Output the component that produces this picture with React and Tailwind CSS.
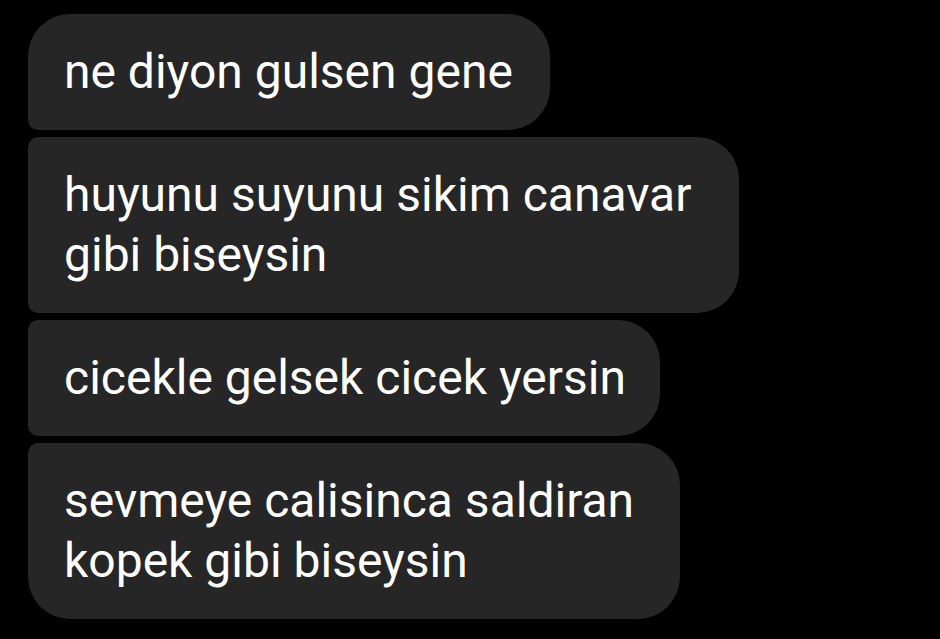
import React from "react";

const messages = [
    { lines: ["ne diyon gulsen gene"], width: "w-[522px]", corners: "rounded-tl-[42px] rounded-bl-[10px]" },
    { lines: ["huyunu suyunu sikim canavar", "gibi biseysin"], width: "w-[711px]", corners: "rounded-tl-[10px] rounded-bl-[10px]" },
    { lines: ["cicekle gelsek cicek yersin"], width: "w-[632px]", corners: "rounded-tl-[10px] rounded-bl-[10px]" },
    { lines: ["sevmeye calisinca saldiran", "kopek gibi biseysin"], width: "w-[652px]", corners: "rounded-tl-[10px] rounded-bl-[42px]" },
];

const Bubble = ({ lines, width, corners }) => (
    <div className={`${width} ${corners} rounded-tr-[42px] rounded-br-[42px] bg-[#262626] pl-[36px] py-[28px] text-white text-[48px] leading-[60px] whitespace-nowrap`}>
        {lines.map((line, i) => (
            <div key={i}>{line}</div>
        ))}
    </div>
);

export default function App() {
    return (
        <div className="w-[940px] h-[639px] overflow-hidden bg-black font-['Roboto',sans-serif]">
            <div className="flex flex-col items-start gap-[7px] pl-[28px] pt-[14px]">
                {messages.map((m, i) => (
                    <Bubble key={i} {...m} />
                ))}
            </div>
        </div>
    );
}
